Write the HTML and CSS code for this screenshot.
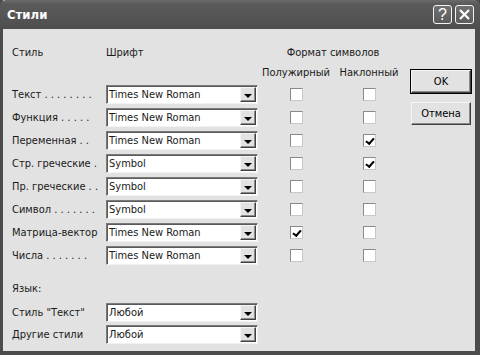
FILE: index.html
```html
<!DOCTYPE html>
<html lang="ru">
<head>
    <meta charset="UTF-8">
    <title>Стили</title>
    <link rel="stylesheet" href="styles.css">
</head>
<body>
    <div class="window">
        <div class="titlebar">
            <span class="title">Стили</span>
            <div class="title-btns">
                <span class="tbtn">?</span>
                <span class="tbtn">
                    <svg width="13" height="13" viewBox="0 0 13 13"><path d="M2 2L11 11M11 2L2 11" stroke="#fff" stroke-width="2.2"/></svg>
                </span>
            </div>
        </div>

        <div class="body">
            <div class="form">
                <div class="grid">
                    <div class="head">Стиль</div>
                    <div class="head">Шрифт</div>
                    <div class="head group">Формат символов</div>

                    <div class="sub"></div>
                    <div class="sub"></div>
                    <div class="sub center">Полужирный</div>
                    <div class="sub center">Наклонный</div>

                    <div class="lbl">Текст . . . . . . . .</div>
                    <div class="combo"><span class="val">Times New Roman</span><span class="drop"></span></div>
                    <div class="cell"><span class="chk"></span></div>
                    <div class="cell"><span class="chk"></span></div>

                    <div class="lbl">Функция . . . . .</div>
                    <div class="combo"><span class="val">Times New Roman</span><span class="drop"></span></div>
                    <div class="cell"><span class="chk"></span></div>
                    <div class="cell"><span class="chk"></span></div>

                    <div class="lbl">Переменная . .</div>
                    <div class="combo"><span class="val">Times New Roman</span><span class="drop"></span></div>
                    <div class="cell"><span class="chk"></span></div>
                    <div class="cell"><span class="chk on"></span></div>

                    <div class="lbl">Стр. греческие .</div>
                    <div class="combo"><span class="val">Symbol</span><span class="drop"></span></div>
                    <div class="cell"><span class="chk"></span></div>
                    <div class="cell"><span class="chk on"></span></div>

                    <div class="lbl">Пр. греческие . .</div>
                    <div class="combo"><span class="val">Symbol</span><span class="drop"></span></div>
                    <div class="cell"><span class="chk"></span></div>
                    <div class="cell"><span class="chk"></span></div>

                    <div class="lbl">Символ . . . . . . .</div>
                    <div class="combo"><span class="val">Symbol</span><span class="drop"></span></div>
                    <div class="cell"><span class="chk"></span></div>
                    <div class="cell"><span class="chk"></span></div>

                    <div class="lbl">Матрица-вектор</div>
                    <div class="combo"><span class="val">Times New Roman</span><span class="drop"></span></div>
                    <div class="cell"><span class="chk on"></span></div>
                    <div class="cell"><span class="chk"></span></div>

                    <div class="lbl">Числа . . . . . . .</div>
                    <div class="combo"><span class="val">Times New Roman</span><span class="drop"></span></div>
                    <div class="cell"><span class="chk"></span></div>
                    <div class="cell"><span class="chk"></span></div>
                </div>

                <div class="lang">Язык:</div>
                <div class="lang-grid">
                    <div class="lbl">Стиль "Текст"</div>
                    <div class="combo"><span class="val">Любой</span><span class="drop"></span></div>
                    <div class="lbl">Другие стили</div>
                    <div class="combo"><span class="val">Любой</span><span class="drop"></span></div>
                </div>
            </div>

            <div class="buttons">
                <button class="btn default">OK</button>
                <button class="btn">Отмена</button>
            </div>
        </div>
    </div>
</body>
</html>
```

FILE: styles.css
```css
body {
    margin: 0;
    background: #e2e2e2;
    font-family: "DejaVu Sans Condensed", "DejaVu Sans", sans-serif;
    font-size: 11px;
    color: #1a1a1a;
}
.window {
    width: 480px;
    height: 355px;
    box-sizing: border-box;
    display: flex;
    flex-direction: column;
    background: #e2e2e2;
    border-left: 3px solid #4c4c4c;
    border-right: 5px solid #4c4c4c;
    border-bottom: 4px solid #4c4c4c;
}
.titlebar {
    height: 29px;
    margin: 0 -5px 0 -3px;
    padding: 0 6px 0 7px;
    display: flex;
    align-items: center;
    justify-content: space-between;
    background: linear-gradient(#6a6a6a 0%, #5a5a5a 15%, #545454 60%, #4e4e4e 100%);
    border-radius: 6px 6px 0 0;
    flex-shrink: 0;
}
.title {
    color: #fff;
    font-weight: bold;
    font-size: 13px;
    padding-bottom: 1px;
}
.title-btns {
    display: flex;
    gap: 3px;
}
.tbtn {
    width: 19px;
    height: 19px;
    box-sizing: border-box;
    border: 1px solid #f4f4f4;
    border-radius: 3px;
    background: linear-gradient(#707070, #5c5c5c);
    color: #fff;
    display: flex;
    align-items: center;
    justify-content: center;
    font-family: "Liberation Sans", sans-serif;
    font-size: 16px;
    line-height: 1;
}
.body {
    flex: 1;
    display: flex;
}
.form {
    width: 405px;
    padding-left: 9px;
    box-sizing: border-box;
}
.grid {
    display: grid;
    grid-template-columns: 94px 154px 72px 74px;
    grid-template-rows: 20px 20px repeat(8, 23px);
    padding-top: 14px;
}
.head,
.sub {
    line-height: 20px;
    white-space: nowrap;
}
.group {
    grid-column: 3 / span 2;
    text-align: center;
}
.center {
    text-align: center;
}
.lbl {
    display: flex;
    align-items: center;
    white-space: nowrap;
}
.combo {
    width: 152px;
    height: 19px;
    align-self: center;
    box-sizing: border-box;
    display: flex;
    background: #fff;
    border-top: 1px solid #7a7a7a;
    border-left: 1px solid #7a7a7a;
    border-right: 1px solid #f2f2f2;
    border-bottom: 1px solid #f2f2f2;
    box-shadow: inset 1px 1px 0 #5a5a5a;
}
.val {
    flex: 1;
    padding-left: 2px;
    line-height: 17px;
}
.drop {
    width: 16px;
    margin: 1px 1px 1px 0;
    box-sizing: border-box;
    background: #e2e2e2;
    border-top: 1px solid #f4f4f4;
    border-left: 1px solid #f4f4f4;
    border-right: 1px solid #404040;
    border-bottom: 1px solid #404040;
    box-shadow: inset -1px -1px 0 #8a8a8a;
    position: relative;
}
.drop::after {
    content: "";
    position: absolute;
    left: 3px;
    top: 6px;
    border-left: 4px solid transparent;
    border-right: 4px solid transparent;
    border-top: 4px solid #000;
}
.cell {
    display: flex;
    align-items: center;
    justify-content: center;
}
.chk {
    width: 13px;
    height: 13px;
    box-sizing: border-box;
    background: #fff;
    border-top: 1px solid #8a8a8a;
    border-left: 1px solid #8a8a8a;
    border-right: 1px solid #c8c8c8;
    border-bottom: 1px solid #c8c8c8;
    position: relative;
}
.chk.on::after {
    content: "";
    position: absolute;
    left: 2px;
    top: 1px;
    width: 6px;
    height: 3px;
    border-left: 2px solid #000;
    border-bottom: 2px solid #000;
    transform: translate(0, 2px) rotate(-48deg) skewX(8deg);
}
.lang {
    margin-top: 14px;
    height: 16px;
    line-height: 16px;
}
.lang-grid {
    display: grid;
    grid-template-columns: 94px 154px;
    grid-auto-rows: 22px;
    margin-top: 4px;
}
.buttons {
    padding-top: 41px;
    display: flex;
    flex-direction: column;
    gap: 9px;
    align-items: flex-start;
}
.btn {
    width: 60px;
    height: 23px;
    margin-left: 3px;
    font-family: "DejaVu Sans Condensed", "DejaVu Sans", sans-serif;
    font-size: 11px;
    background: #e2e2e2;
    color: #000;
    padding: 0;
    border-top: 1px solid #f6f6f6;
    border-left: 1px solid #f6f6f6;
    border-right: 1px solid #404040;
    border-bottom: 1px solid #404040;
    box-shadow: inset -1px -1px 0 #8a8a8a;
}
.btn.default {
    outline: 1px solid #000;
}
```
